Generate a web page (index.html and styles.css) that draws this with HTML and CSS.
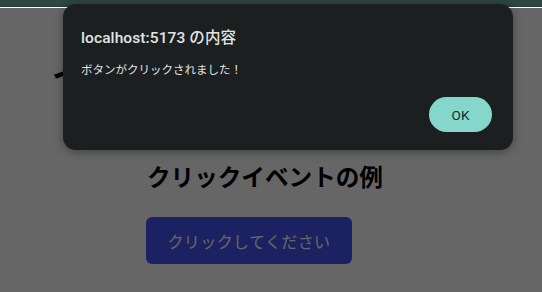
FILE: index.html
```html
<!DOCTYPE html>
<html lang="ja">
<head>
<meta charset="utf-8">
<link rel="stylesheet" href="styles.css">
</head>
<body>
<div class="topbar"></div>
<main class="page">
  <h1 class="title">イベントハンドリングの基本</h1>
  <section class="demo">
    <h2 class="subtitle">クリックイベントの例</h2>
    <button class="action">クリックしてください</button>
  </section>
</main>
<div class="overlay"></div>
<div class="dialog">
  <div class="dialog-title">localhost:5173 の内容</div>
  <div class="dialog-msg">ボタンがクリックされました！</div>
  <div class="dialog-actions"><button class="ok">OK</button></div>
</div>
</body>
</html>
```
FILE: styles.css
```css
* { box-sizing: border-box; }
html, body { margin: 0; padding: 0; }
body {
  width: 542px;
  height: 292px;
  overflow: hidden;
  background: #ffffff;
  font-family: Roboto, "Noto Sans CJK JP", sans-serif;
  position: relative;
}
.topbar {
  height: 7px;
  background: #2e4542;
  border-bottom: 1px solid #263a37;
}
.page {
  padding-left: 146px;
}
.title {
  margin: 46px 0 0 -94px;
  font-size: 32px;
  line-height: 40px;
  font-weight: 700;
  color: #000;
  font-family: "Noto Sans CJK JP", sans-serif;
  white-space: nowrap;
}
.demo {
  padding-top: 66px;
}
.subtitle {
  margin: 0 0 0 1px;
  font-size: 23.6px;
  line-height: 34px;
  font-weight: 700;
  color: #000;
  font-family: "Noto Sans CJK JP", sans-serif;
}
.action {
  margin-top: 24px;
  width: 206px;
  height: 47px;
  border: none;
  border-radius: 6px;
  background: #4856f2;
  color: #ffffff;
  font-size: 16px;
  letter-spacing: 0.4px;
  font-family: "Noto Sans CJK JP", sans-serif;
}
.overlay {
  position: absolute;
  left: 0; top: 8px; right: 0; bottom: 0;
  background: rgba(0,0,0,0.6);
}
.dialog {
  position: absolute;
  left: 63px;
  top: 4px;
  width: 450px;
  height: 146px;
  background: #1b1f20;
  border-radius: 13px;
  box-shadow: 0 2px 10px rgba(0,0,0,0.35);
  padding: 24px 21px 0 18px;
  color: #e2e4e4;
}
.dialog-title {
  font-size: 15.5px;
  line-height: 20px;
  font-weight: 500;
  letter-spacing: 0.1px;
}
.dialog-msg {
  margin-top: 13px;
  font-size: 11.5px;
  line-height: 16px;
  font-family: "Noto Sans CJK JP", Roboto, sans-serif;
}
.dialog-actions {
  display: flex;
  justify-content: flex-end;
  margin-top: 20px;
}
.ok {
  width: 63px;
  height: 35px;
  border: none;
  border-radius: 18px;
  background: #86d7cb;
  color: #0d2b27;
  font-size: 13.5px;
  font-family: Roboto, sans-serif;
  font-weight: 400;
}
```
